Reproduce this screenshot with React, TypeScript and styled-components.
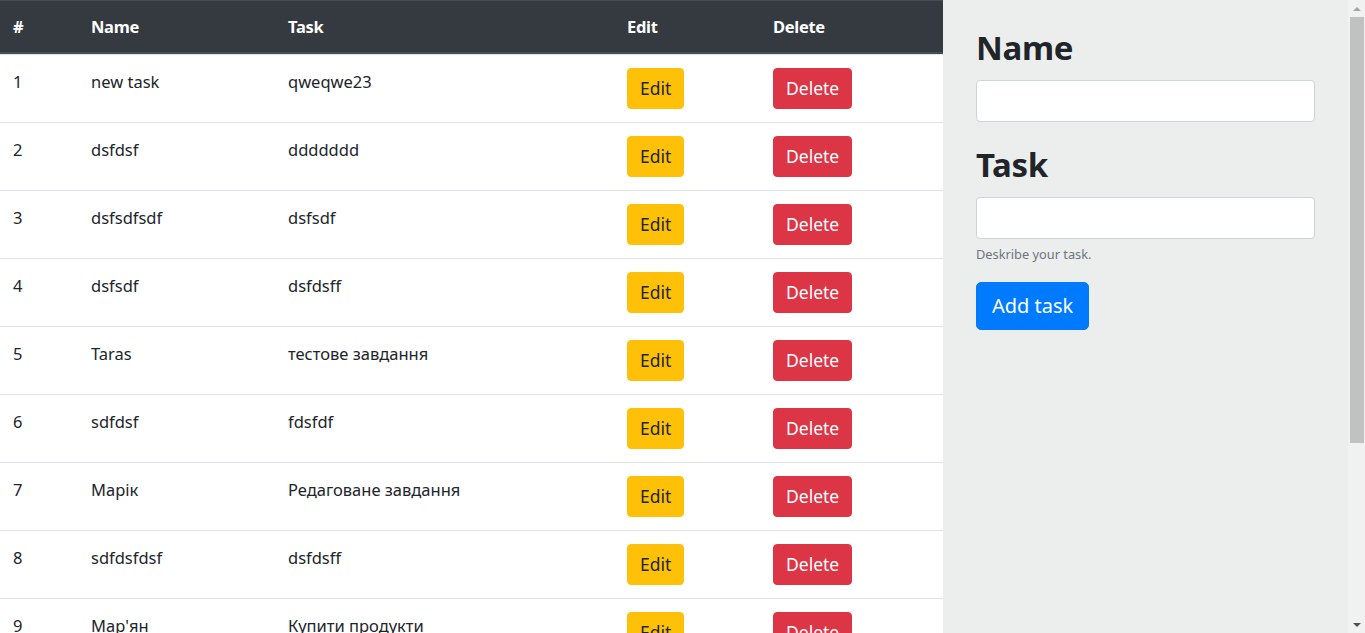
import React from "react";
import styled, {createGlobalStyle} from "styled-components";

type Task = { id: number; name: string; task: string };

const tasks: Task[] = [
    {id: 1, name: "new task", task: "qweqwe23"},
    {id: 2, name: "dsfdsf", task: "ddddddd"},
    {id: 3, name: "dsfsdfsdf", task: "dsfsdf"},
    {id: 4, name: "dsfsdf", task: "dsfdsff"},
    {id: 5, name: "Taras", task: "тестове завдання"},
    {id: 6, name: "sdfdsf", task: "fdsfdf"},
    {id: 7, name: "Марік", task: "Редаговане завдання"},
    {id: 8, name: "sdfdsfdsf", task: "dsfdsff"},
    {id: 9, name: "Мар'ян", task: "Купити продукти"},
];

const GlobalStyle = createGlobalStyle`
    html, body {
        margin: 0;
        padding: 0;
        overflow: hidden;
    }
    body {
        font-family: "Noto Sans", "Open Sans", sans-serif;
        font-size: 16px;
        color: #212529;
        background: #fff;
    }
    * {
        box-sizing: border-box;
    }
`;

const App = () => {
    return (
        <>
            <GlobalStyle/>
            <Screen>
                <Viewport>
                    <TableSide>
                        <TaskTable>
                            <colgroup>
                                <col style={{width: 78}}/>
                                <col style={{width: 197}}/>
                                <col style={{width: 339}}/>
                                <col style={{width: 146}}/>
                                <col style={{width: 183}}/>
                            </colgroup>
                            <thead>
                            <tr>
                                <HeadCell>#</HeadCell>
                                <HeadCell>Name</HeadCell>
                                <HeadCell>Task</HeadCell>
                                <HeadCell>Edit</HeadCell>
                                <HeadCell>Delete</HeadCell>
                            </tr>
                            </thead>
                            <tbody>
                            {tasks.map(t =>
                                <tr key={`task-${t.id}`}>
                                    <Cell>{t.id}</Cell>
                                    <Cell>{t.name}</Cell>
                                    <Cell>{t.task}</Cell>
                                    <Cell><ActionButton variant="edit">Edit</ActionButton></Cell>
                                    <Cell><ActionButton variant="delete">Delete</ActionButton></Cell>
                                </tr>
                            )}
                            </tbody>
                        </TaskTable>
                    </TableSide>
                    <FormSide>
                        <FieldGroup gap={23}>
                            <FieldTitle>Name</FieldTitle>
                            <TextInput type="text"/>
                        </FieldGroup>
                        <FieldGroup gap={18}>
                            <FieldTitle>Task</FieldTitle>
                            <TextInput type="text"/>
                            <HelpText>Deskribe your task.</HelpText>
                        </FieldGroup>
                        <AddButton type="button">Add task</AddButton>
                    </FormSide>
                </Viewport>
                {/* fake page scrollbar, the headless browser hides the real one */}
                <ScrollBar>
                    <ScrollArrow dir="up"/>
                    <ScrollTrack>
                        <ScrollThumb/>
                    </ScrollTrack>
                    <ScrollArrow dir="down"/>
                </ScrollBar>
            </Screen>
        </>
    );
};
export default App

const Screen = styled.div`
    display: flex;
    height: 100vh;
    overflow: hidden;
`;

const Viewport = styled.div`
    flex: 1;
    display: flex;
    align-items: stretch;
    overflow: hidden;
`;

const TableSide = styled.div`
    width: 943px;
    flex-shrink: 0;
`;

const TaskTable = styled.table`
    width: 100%;
    table-layout: fixed;
    border-collapse: separate;
    border-spacing: 0;
`;

const HeadCell = styled.th`
    text-align: left;
    font-weight: 700;
    font-size: 16.5px;
    line-height: 25px;
    padding: 13px 13px;
    color: #fff;
    background: #343a40;
    border-top: 1px solid #454d55;
    border-bottom: 2px solid #454d55;
    letter-spacing: -0.3px;
`;

const Cell = styled.td`
    vertical-align: top;
    font-size: 16.5px;
    line-height: 28px;
    padding: 13px 13px 13px;
    border-top: 1px solid #dee2e6;
`;

const ActionButton = styled.button<{variant: "edit" | "delete"}>`
    display: block;
    font-family: inherit;
    font-size: 17.5px;
    line-height: 27px;
    padding: 6px 12px;
    border-radius: 4px;
    border: 1px solid ${p => p.variant === "edit" ? "#ffc107" : "#dc3545"};
    background: ${p => p.variant === "edit" ? "#ffc107" : "#dc3545"};
    color: ${p => p.variant === "edit" ? "#212529" : "#fff"};
    cursor: pointer;
`;

const FormSide = styled.div`
    flex: 1;
    background: #eceeee;
    padding: 28px 33px;
`;

const FieldGroup = styled.div<{gap: number}>`
    margin-bottom: ${p => p.gap}px;
`;

const FieldTitle = styled.h2`
    margin: 0 0 12px;
    font-size: 33px;
    line-height: 40px;
    font-weight: 700;
    letter-spacing: -0.3px;
    color: #212529;
`;

const TextInput = styled.input`
    display: block;
    width: 100%;
    height: 42px;
    padding: 6px 12px;
    font-family: inherit;
    font-size: 16px;
    color: #495057;
    background: #fff;
    border: 1px solid #ced4da;
    border-radius: 4px;
`;

const HelpText = styled.small`
    display: block;
    margin-top: 6px;
    font-size: 12.8px;
    line-height: 19px;
    color: #6c757d;
`;

const AddButton = styled.button`
    display: block;
    font-family: inherit;
    font-size: 20px;
    line-height: 30px;
    padding: 8px 15px;
    color: #fff;
    background: #007bff;
    border: 1px solid #007bff;
    border-radius: 5px;
    cursor: pointer;
`;

const ScrollBar = styled.div`
    width: 17px;
    flex-shrink: 0;
    display: flex;
    flex-direction: column;
    background: #f1f1f1;
`;

const ScrollArrow = styled.div<{dir: "up" | "down"}>`
    height: 17px;
    display: flex;
    align-items: center;
    justify-content: center;
    &::after {
        content: "";
        width: 0;
        height: 0;
        border-left: 4px solid transparent;
        border-right: 4px solid transparent;
        ${p => p.dir === "up"
            ? "border-bottom: 4px solid #a3a3a3;"
            : "border-top: 4px solid #505050;"}
    }
`;

const ScrollTrack = styled.div`
    flex: 1;
    padding: 0 1px 0 2px;
`;

const ScrollThumb = styled.div`
    height: 426px;
    background: #c1c1c1;
`;
